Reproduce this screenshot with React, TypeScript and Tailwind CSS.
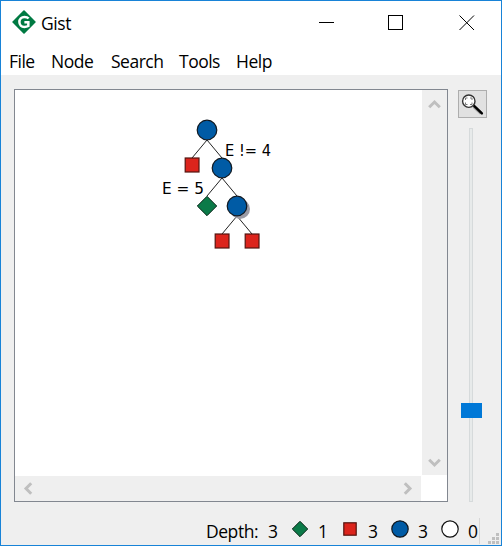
import React from "react";

const BLUE = "#005ba5";
const RED = "#dc241c";
const GREEN = "#0b7a48";

function Label({ x, y, w, children }: { x: number; y: number; w: number; children: string }) {
  return (
    <text x={x} y={y} fontSize={15.5} textLength={w} lengthAdjust="spacingAndGlyphs" className="[font-family:'DejaVu_Sans_Condensed','DejaVu_Sans',sans-serif]" fill="#000">
      {children}
    </text>
  );
}

function GistLogo() {
  return (
    <svg className="block" width="24" height="24" viewBox="0 0 26 26">
      <path d="M13 1.2 24.8 13 13 24.8 1.2 13Z" fill="#007a43" stroke="#007a43" strokeWidth="1.8" strokeLinejoin="round" />
      <path d="M18 9.2C17 8 15.2 7.5 13.5 7.5C10.3 7.5 8 9.8 8 13S10.3 18.3 13.3 18.3C15 18.3 16.5 18 17.7 17.3V13.3H13.4" fill="none" stroke="#fff" strokeWidth="2.7" />
    </svg>
  );
}

function Menu({ text, width }: { text: string; width: string }) {
  return (
    <button className={`${width} h-[27px] shrink-0 text-left`}>
      <span className="whitespace-pre">{text}</span>
    </button>
  );
}

function Chevron({ turn }: { turn: string }) {
  return (
    <svg className={`block ${turn}`} width="13" height="13" viewBox="0 0 13 13">
      <path d="M1.2 9.2 6.5 4 11.8 9.2" fill="none" stroke="#bfbfbf" strokeWidth="3" />
    </svg>
  );
}

function Tree() {
  return (
    <svg className="block" width="407" height="385" viewBox="15 90 407 385">
      <path d="M207 140 192 158M207 140 222 158M222 178 207 196M222 178 237 196M237 216 222 234M237 216 252 234" stroke="#222" strokeWidth="1" fill="none" />
      <circle cx="240" cy="209" r="10" fill="#9b9ba5" />
      <g fill={BLUE} stroke="#101820" strokeWidth="1.2">
        <circle cx="207" cy="130" r="9.8" />
        <circle cx="222" cy="168" r="9.8" />
        <circle cx="237" cy="206" r="9.8" />
      </g>
      <g fill={RED} stroke="#541410" strokeWidth="1.2">
        <rect x="185.2" y="158" width="13.8" height="14" />
        <rect x="215.2" y="234" width="13.8" height="14" />
        <rect x="245.2" y="234" width="13.8" height="14" />
      </g>
      <path d="M207 196.3 216.7 206 207 215.7 197.3 206Z" fill={GREEN} stroke="#062416" />
      <Label x={225} y={156} w={46}>E != 4</Label>
      <Label x={162} y={194} w={42}>E = 5</Label>
    </svg>
  );
}

function Magnifier() {
  return (
    <svg className="block" width="24" height="24" viewBox="0 0 24 24">
      <path d="m13.6 14.4 7.5 6.8" stroke="#999" strokeWidth="3.2" />
      <path d="m14.1 13.8 7.8 7.6" stroke="#000" strokeWidth="2.4" strokeLinecap="round" />
      <circle cx="8.8" cy="9.2" r="6.2" fill="#fff" stroke="#333" strokeWidth="1.4" />
      <path d="M5.5 8V6H7.5M10 6H12V8M12 10.5V12.5H10M7.5 12.5H5.5V10.5" fill="none" stroke="#777" strokeWidth="1" />
    </svg>
  );
}

function Grip() {
  return (
    <svg className="ml-[8px] mt-[15px] block" width="11" height="11" viewBox="0 0 11 11" fill="#bfbfbf">
      <rect x="8" y="0" width="3" height="3" />
      <rect x="4" y="4" width="3" height="3" />
      <rect x="8" y="4" width="3" height="3" />
      <rect x="0" y="8" width="3" height="3" />
      <rect x="4" y="8" width="3" height="3" />
      <rect x="8" y="8" width="3" height="3" />
    </svg>
  );
}

function Stat({ value, width, children }: { value: number; width: string; children: React.ReactNode }) {
  return (
    <div className={`flex ${width} shrink-0 items-start`}>
      <svg className="mt-[2px] block" width="18" height="18" viewBox="0 0 18 18">{children}</svg>
      <span className="ml-[9px]">{value}</span>
    </div>
  );
}

export default function App() {
  return (
    <div className="flex h-[546px] w-[502px] flex-col overflow-hidden border border-[#1883d7] bg-[#efefef] text-[17.5px] text-black [font-family:'Open_Sans','Noto_Sans',sans-serif]">
      <header className="flex h-[47px] shrink-0 bg-white">
        <div className="ml-[11px] mt-[9px]"><GistLogo /></div>
        <div className="ml-[5px] mt-[9px] leading-[27px] tracking-[-0.4px]">Gist</div>
        <svg className="ml-auto mr-[26px] mt-[13px] block" width="156" height="17" viewBox="0 0 156 17" fill="none" stroke="#000" shapeRendering="crispEdges">
          <path d="M0 8.5h15" />
          <rect x="69.5" y="1.5" width="14" height="14" />
          <path d="m140.5 1.5 14.5 14.5M155 1.5 140.5 16" shapeRendering="auto" />
        </svg>
      </header>
      <nav className="flex h-[27px] shrink-0 bg-white pl-[8px] leading-[27px] tracking-[-0.5px]">
        <Menu text="File" width="w-[42px]" />
        <Menu text="Node" width="w-[60px]" />
        <Menu text="Search" width="w-[68px]" />
        <Menu text="Tools" width="w-[57px]" />
        <Menu text="Help" width="w-[50px]" />
      </nav>
      <main className="flex h-[427px] shrink-0 pl-[13px] pt-[14px]">
        <div className="grid h-[413px] w-[434px] grid-cols-[407px_25px] grid-rows-[385px_26px] border border-[#828790] bg-white">
          <Tree />
          <div className="flex flex-col items-center justify-between bg-[#efefef] pb-[6px] pt-[8px]">
            <Chevron turn="" />
            <Chevron turn="rotate-180" />
          </div>
          <div className="mr-px mt-px flex items-center justify-between bg-[#efefef] px-[7px]">
            <Chevron turn="-rotate-90" />
            <Chevron turn="rotate-90" />
          </div>
        </div>
        <div className="ml-[10px] flex w-[29px] flex-col pt-px">
          <button className="h-[28px] w-[29px] shrink-0 border border-[#adadad] bg-[#e1e1e1] pl-px"><Magnifier /></button>
          <div className="ml-[3px] mt-[10px] flex h-[374px] w-[21px] shrink-0 flex-col">
            <div className="ml-[8px] h-[275px] w-[4px] border border-b-0 border-[#d6dadb] bg-[#e7eaea]" />
            <div className="h-[15px] w-[21px] bg-[#0078d7]" />
            <div className="ml-[8px] h-[84px] w-[4px] border border-t-0 border-[#d6dadb] bg-[#e7eaea]" />
          </div>
        </div>
      </main>
      <footer className="flex h-[43px] shrink-0 pl-[205px] pt-[16px] leading-[27px]">
        <span className="w-[62px] shrink-0 tracking-[-0.45px]">Depth:</span>
        <span className="w-[23px] shrink-0">3</span>
        <Stat value={1} width="w-[50px]"><path d="M9 1.3 16.7 9 9 16.7 1.3 9Z" fill={GREEN} stroke="#062416" /></Stat>
        <Stat value={3} width="w-[50px]"><rect x="2.8" y="2.8" width="12.4" height="12.4" fill={RED} stroke="#541410" strokeWidth="1.2" /></Stat>
        <Stat value={3} width="w-[50px]"><circle cx="9" cy="9" r="8.2" fill={BLUE} stroke="#101820" strokeWidth="1.2" /></Stat>
        <Stat value={0} width="w-[38px]"><circle cx="9" cy="9" r="8.2" fill="#fff" stroke="#111" strokeWidth="1.2" /></Stat>
        <div className="h-[26px] w-px shrink-0 bg-[#d7d7d7]" />
        <Grip />
      </footer>
    </div>
  );
}
